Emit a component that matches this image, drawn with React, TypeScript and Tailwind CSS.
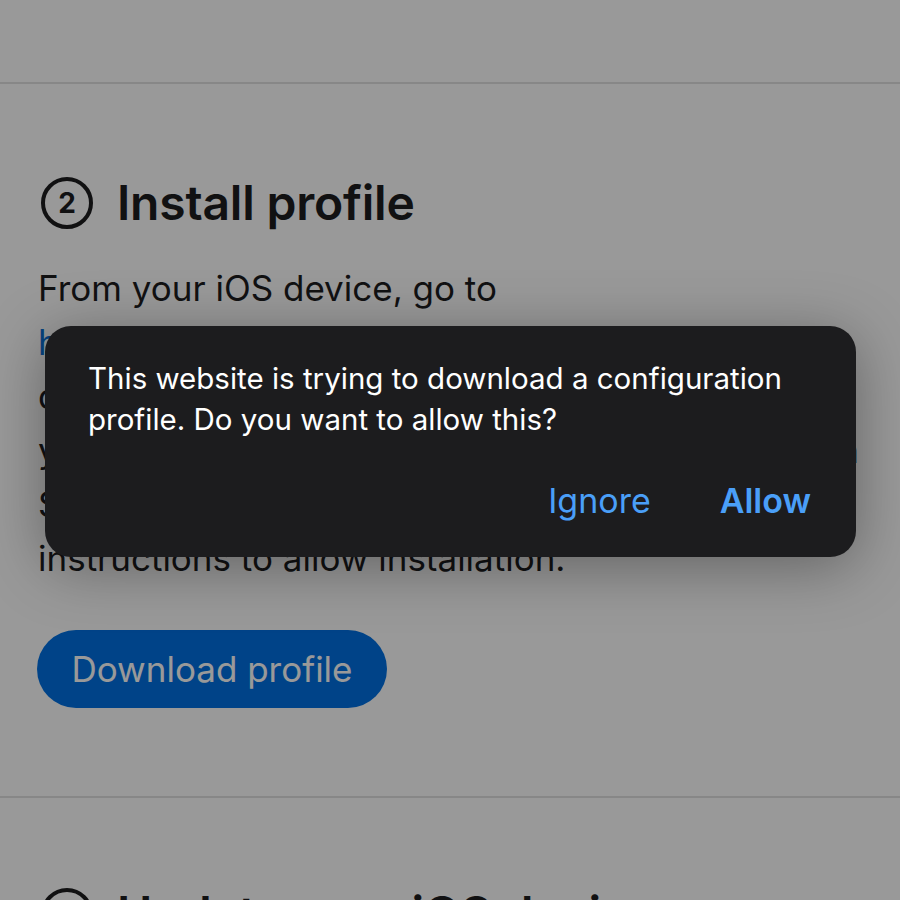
import React from "react";

function StepHeading({ n, title }: { n: string; title: string }) {
  return (
    <div className="flex items-center gap-[24px] h-[52px]">
      <div className="w-[52px] h-[52px] rounded-full border-[4.5px] border-[#1d1d1f] flex items-center justify-center shrink-0">
        <span className="text-[28px] font-bold leading-none text-[#1d1d1f]">{n}</span>
      </div>
      <h2 className="text-[48px] font-semibold leading-[52px] tracking-[-0.2px] text-[#1d1d1f] whitespace-nowrap">{title}</h2>
    </div>
  );
}

export default function App() {
  return (
    <div
      className="relative w-[900px] h-[900px] overflow-hidden bg-white"
      style={{ fontFamily: "Inter, 'Liberation Sans', sans-serif" }}
    >
      <div className="h-[82px]" />
      <div className="h-[2px] bg-[#e2e2e2]" />
      <section className="pl-[41px] pt-[93px]">
        <StepHeading n="2" title="Install profile" />
        <div className="ml-[-3px] mt-[32px] w-[821px] text-[35px] leading-[54px] text-[#1d1d1f]">
          <div>From your iOS device, go to</div>
          <div>
            <a className="text-[#0a70d6]">https://mdm.example.com/enroll</a>
          </div>
          <div>download the configuration profile. Once</div>
          <div className="whitespace-nowrap text-justify [text-align-last:justify]">you have it, open the Settings app and then</div>
          <div>Settings shows the profile. Follow the</div>
          <div>instructions to allow installation.</div>
        </div>
        <button className="mt-[45px] ml-[-4px] h-[78px] w-[350px] rounded-full bg-[#0071e3] text-white text-[35px] leading-none">
          Download profile
        </button>
      </section>
      <div className="mt-[88px] h-[2px] bg-[#e2e2e2]" />
      <section className="pl-[41px] pt-[90px]">
        <StepHeading n="3" title="Update your iOS device" />
      </section>

      <div className="absolute inset-0 bg-black/40" />

      <div className="absolute left-[45px] top-[326px] w-[811px] h-[231px] rounded-[26px] bg-[#1c1c1e] shadow-[0_10px_60px_rgba(0,0,0,0.35)] pl-[43px] pr-[40px] pt-[32px] flex flex-col">
        <p className="text-[29.5px] leading-[41px] text-white">
          This website is trying to download a configuration profile. Do you want to allow this?
        </p>
        <div className="mt-auto mb-[39px] pr-[5px] flex justify-end items-center gap-[69px] text-[34px] leading-none text-[#4a9ff8]">
          <span>Ignore</span>
          <span className="font-semibold">Allow</span>
        </div>
      </div>
    </div>
  );
}
